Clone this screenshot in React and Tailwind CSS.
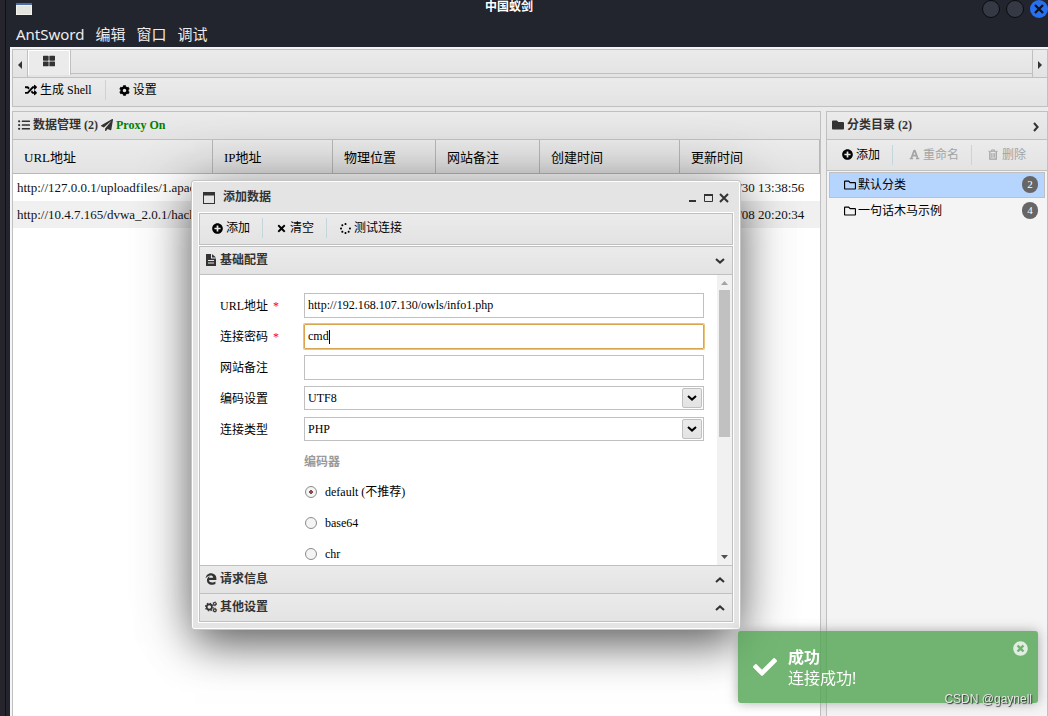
import React, { useState } from 'react';
import {
    FaRandom, FaCog, FaListUl, FaPaperPlane, FaFolder, FaRegFolder, FaFont,
    FaPlusCircle, FaTimes, FaSpinner, FaEdgeLegacy, FaThLarge, FaCheck, FaTimesCircle,
} from 'react-icons/fa';

const serif = "font-['Liberation_Serif','Noto_Sans_CJK_SC',serif]";
const sans = "font-['Noto_Sans','Noto_Sans_CJK_SC',sans-serif]";
const bar = 'bg-gradient-to-b from-[#ebebeb] to-[#e3e3e3]';

const columns = ['URL地址', 'IP地址', '物理位置', '网站备注', '创建时间', '更新时间'];

const rows = [
    { url: 'http://127.0.0.1/uploadfiles/1.apac', updated: '2022/03/30 13:38:56' },
    { url: 'http://10.4.7.165/dvwa_2.0.1/hack', updated: '2022/03/08 20:20:34' },
];

const categories = [
    { name: '默认分类', count: 2, active: true },
    { name: '一句话木马示例', count: 4, active: false },
];

const encoders = ['default (不推荐)', 'base64', 'chr'];

const Chevron = ({ className = '' }) => (
    <svg width="10" height="6" viewBox="0 0 10 6" fill="none" stroke="currentColor" strokeWidth="2" className={className}>
        <path d="M1 1l4 3.6L9 1" />
    </svg>
);

const FileIcon = ({ className = '' }) => (
    <svg viewBox="0 0 12 12" className={className}>
        <path d="M1 0h5v4.500h5V12H1z" fill="currentColor" />
        <path d="M7 0l4 3.500H7z" fill="currentColor" />
        <path d="M3 6.500h6M3 9h6" stroke="#e7e7e7" />
    </svg>
);

const TrashIcon = ({ className = '' }) => (
    <svg viewBox="0 0 11 12" fill="none" stroke="currentColor" className={className}>
        <path d="M0 2.500h10M3.500 2.500v-1.500h3v1.500" />
        <path d="M1.500 3v8h7V3" strokeWidth="1.400" />
        <path d="M3.500 4.500v5M5 4.500v5M6.500 4.500v5" strokeWidth="0.900" />
    </svg>
);

const CogsIcon = ({ className = '' }) => (
    <svg viewBox="0 0 12 12" fill="none" stroke="currentColor" className={className}>
        <circle cx="4.3" cy="6" r="2.600" strokeWidth="1.600" />
        <circle cx="4.3" cy="6" r="3.800" strokeWidth="1.200" strokeDasharray="1.500 1.485" />
        <circle cx="9.8" cy="2.8" r="1.300" strokeWidth="1.100" />
        <circle cx="9.8" cy="2.8" r="2" strokeWidth="0.800" strokeDasharray="1 1.094" />
        <circle cx="9.8" cy="9.2" r="1.300" strokeWidth="1.100" />
        <circle cx="9.8" cy="9.2" r="2" strokeWidth="0.800" strokeDasharray="1 1.094" />
    </svg>
);

const Separator = () => <span className="w-px h-5 bg-[#c3d6dc]" />;

const ToolButton = ({ icon: Icon, wide, children, disabled, className = '' }) => (
    <button type="button" disabled={disabled} className={`flex items-center gap-[3px] text-xs whitespace-nowrap text-black disabled:text-[#a3a3a3] ${className}`}>
        <Icon className={wide ? 'w-3 h-3' : 'w-[11px] h-[11px]'} />
        {children}
    </button>
);

const TitleBar = () => (
    <header className={`h-[47px] shrink-0 bg-[#23252e] ${sans}`}>
        <div className="grid grid-cols-[1fr_auto_1fr] items-center h-[14px] pl-[10px]">
            <svg width="16" height="12" viewBox="0 0 16 12">
                <rect width="16" height="12" fill="#f1f1ed" />
                <rect width="16" height="2" fill="#4a6da8" />
                <rect x="1" y="3" width="14" height="8" fill="#e3e3df" />
            </svg>
            <h1 className="pr-[46px] pb-1 text-xs leading-[14px] font-bold text-white">中国蚁剑</h1>
            <div className="flex justify-end gap-[6px]">
                <button type="button" aria-label="最小化" className="w-[18px] h-[18px] rounded-full bg-[#343944] border border-[#0b0c10]" />
                <button type="button" aria-label="最大化" className="w-[18px] h-[18px] rounded-full bg-[#343944] border border-[#0b0c10]" />
                <button type="button" aria-label="关闭" className="w-[18px] h-[18px] rounded-full bg-[#2771f1] flex items-center justify-center">
                    <svg width="10" height="10" viewBox="0 0 10 10" stroke="#10131c" strokeWidth="2.4">
                        <path d="M1 1l8 8M9 1l-8 8" />
                    </svg>
                </button>
            </div>
        </div>
        <nav className="flex gap-[11px] pl-[10px] pt-[10px] text-[15px] leading-5 text-[#ececec]">
            {['AntSword', '编辑', '窗口', '调试'].map((item) => (
                <button key={item} type="button">{item}</button>
            ))}
        </nav>
    </header>
);

const TabBar = () => (
    <div className={`flex h-[28px] shrink-0 border-t border-l border-r border-[#c0c0c0] ${bar}`}>
        <button type="button" aria-label="向左" className="w-[15px] flex items-center justify-center border-r border-[#c0c0c0] pt-[3px]">
            <svg width="4" height="8" viewBox="0 0 4 8"><path d="M4 0v8L0 4z" fill="#333" /></svg>
        </button>
        <button type="button" aria-label="主页" className="w-[43px] flex justify-center items-start pt-[5px] h-[25px] bg-[#ebebeb] border-r border-[#c0c0c0] shadow-[inset_1px_1px_0_#fff,inset_-1px_0_0_#fff]">
            <FaThLarge className="w-3 h-3 text-[#333]" />
        </button>
        <div className="flex-1 h-[24px] border-b border-[#c0c0c0]" />
        <button type="button" aria-label="向右" className="w-[15px] flex items-center justify-center border-l border-[#c0c0c0] pt-[3px]">
            <svg width="4" height="8" viewBox="0 0 4 8"><path d="M0 0v8l4-4z" fill="#333" /></svg>
        </button>
    </div>
);

const ShellList = () => (
    <section className="flex-1 min-w-0 flex flex-col border border-b-0 border-[#c0c0c0] bg-white">
        <h2 className={`flex items-center gap-[3px] h-[28px] shrink-0 pl-[5px] pb-px text-xs font-bold text-[#333] border-b border-[#c0c0c0] ${bar}`}>
            <FaListUl className="w-3 h-3" />
            <span>数据管理 (2)</span>
            <FaPaperPlane className="w-3 h-3" />
            <span className="text-[#008000]">Proxy On</span>
        </h2>
        <table className="w-full table-fixed border-separate border-spacing-0 text-[13px] leading-4">
            <colgroup>
                <col className="w-[200px]" />
                <col className="w-[120px]" />
                <col className="w-[103px]" />
                <col className="w-[104px]" />
                <col className="w-[140px]" />
                <col />
            </colgroup>
            <thead>
                <tr>
                    {columns.map((name) => (
                        <th key={name} className={`h-[34px] pl-[11px] pt-[2px] text-left font-normal text-black border-r border-b border-[#b8b8b8] ${bar}`}>{name}</th>
                    ))}
                </tr>
            </thead>
            <tbody>
                {rows.map((row) => (
                    <tr key={row.url} className="h-[27px] text-[#111] even:bg-[#f0f0f0]">
                        <td className="pl-1 whitespace-nowrap">{row.url}</td>
                        <td />
                        <td />
                        <td />
                        <td />
                        <td className="text-center whitespace-nowrap">{row.updated}</td>
                    </tr>
                ))}
            </tbody>
        </table>
    </section>
);

const CategoryPanel = () => (
    <aside className="w-[222px] shrink-0 flex flex-col border border-b-0 border-[#c0c0c0] bg-[#f4f4f4]">
        <h2 className={`flex items-center gap-[3px] h-[28px] shrink-0 pl-[5px] pr-[6px] pb-px text-xs font-bold text-[#333] border-b border-[#c0c0c0] ${bar}`}>
            <FaFolder className="w-3 h-3" />
            <span className="flex-1">分类目录 (2)</span>
            <button type="button" aria-label="折叠" className="pt-[3px]"><Chevron className="-rotate-90" /></button>
        </h2>
        <div className={`flex items-center h-[31px] shrink-0 border-b border-[#c0c0c0] pb-px ${bar}`}>
            <ToolButton icon={FaPlusCircle} className="pl-[15px] pr-3">添加</ToolButton>
            <Separator />
            <ToolButton icon={FaFont} disabled className="pl-4 pr-3">重命名</ToolButton>
            <Separator />
            <ToolButton icon={TrashIcon} disabled className="pl-4">删除</ToolButton>
        </div>
        <ul className="p-px text-xs text-black">
            {categories.map((item) => (
                <li
                    key={item.name}
                    className={`flex items-center gap-[2px] h-[26px] mx-px pl-[14px] pr-[6px] pb-px border ${item.active ? 'bg-[#b5d5ff] border-[#c0c0c0]' : 'border-transparent'}`}
                >
                    <FaRegFolder className="w-3 h-3" />
                    <span className="flex-1">{item.name}</span>
                    <span className="w-4 h-[17px] rounded-full bg-[#666] text-white text-[11px] leading-[17px] text-center">{item.count}</span>
                </li>
            ))}
        </ul>
    </aside>
);

const Field = ({ id, label, required, children }) => (
    <div className="flex items-center h-[31px]">
        <label htmlFor={id} className="w-[84px] shrink-0 pt-px">
            {label}
            {required && <span className="text-[#f00] ml-[5px]">*</span>}
        </label>
        <div className="relative flex-1">{children}</div>
    </div>
);

const SelectBox = ({ id, options }) => (
    <div className="relative pb-px">
        <select id={id} className="block w-full h-6 pl-[3px] pb-px bg-white border border-[#c0c0c0] appearance-none outline-none">
            {options.map((o) => <option key={o}>{o}</option>)}
        </select>
        <span className={`absolute right-[2px] top-[2px] w-5 h-5 flex items-center justify-center pointer-events-none border border-[#c0c0c0] rounded-[2px] ${bar}`}>
            <Chevron />
        </span>
    </div>
);

const Section = ({ icon: Icon, title, open }) => (
    <h3 className="shrink-0">
        <button type="button" className={`w-full flex items-center gap-[3px] h-[28px] pl-[5px] pr-[7px] pb-px text-xs font-bold text-[#333] border-b border-[#c0c0c0] ${bar}`}>
            <Icon className="w-3 h-3" />
            <span className="flex-1 text-left">{title}</span>
            <Chevron className={open ? 'translate-y-px' : 'rotate-180 translate-y-px'} />
        </button>
    </h3>
);

const AddDialog = () => {
    const [url, setUrl] = useState('http://192.168.107.130/owls/info1.php');
    const [pwd, setPwd] = useState('cmd');
    const [note, setNote] = useState('');
    const [encoder, setEncoder] = useState(encoders[0]);

    return (
        <div
            role="dialog"
            aria-label="添加数据"
            className="absolute left-[191px] top-[180px] w-[550px] h-[450px] flex flex-col px-[6px] pb-[6px] rounded-[3px] border border-[#c4c4c4] bg-[#e4e4e4] shadow-[inset_0_0_0_1px_#fff,0_0_60px_rgba(0,0,0,0.3),0_18px_40px_-4px_rgba(0,0,0,0.5)]"
        >
            <div className="flex items-center h-[31px] shrink-0 pl-[5px] pr-[5px] pt-[2px] text-[#333]">
                <svg width="12" height="12" viewBox="0 0 12 12" fill="none" stroke="currentColor">
                    <rect x="0.5" y="0.5" width="11" height="11" />
                    <path d="M0 2h12" strokeWidth="3" />
                </svg>
                <h2 className="flex-1 pl-2 pb-[2px] text-xs font-bold">添加数据</h2>
                <div className="flex items-center gap-[6px]">
                    <button type="button" aria-label="最小化">
                        <svg width="10" height="10" viewBox="0 0 10 10"><path d="M1 7h7v2H1z" fill="currentColor" /></svg>
                    </button>
                    <button type="button" aria-label="最大化">
                        <svg width="9" height="8" viewBox="0 0 9 8" fill="none" stroke="currentColor"><path d="M.5 1v6.500h8V1" /><path d="M0 1h9" strokeWidth="2" /></svg>
                    </button>
                    <button type="button" aria-label="关闭">
                        <svg width="10" height="10" viewBox="0 0 10 10" stroke="currentColor" strokeWidth="2"><path d="M1 1l8 8M9 1L1 9" /></svg>
                    </button>
                </div>
            </div>
            <div className="flex-1 min-h-0 flex flex-col border border-white bg-white">
                <div className={`flex items-center h-8 shrink-0 mb-px pb-[2px] border border-[#c0c0c0] ${bar}`}>
                    <ToolButton icon={FaPlusCircle} className="pl-3 pr-3">添加</ToolButton>
                    <Separator />
                    <ToolButton icon={FaTimes} className="pl-[13px] pr-3">清空</ToolButton>
                    <Separator />
                    <ToolButton icon={FaSpinner} className="pl-[13px]">测试连接</ToolButton>
                </div>
                <div className="flex-1 min-h-0 flex flex-col border border-b-0 border-[#c0c0c0]">
                    <Section icon={FileIcon} title="基础配置" open />
                    <div className="flex-1 min-h-0 flex overflow-hidden border-b border-[#c0c0c0]">
                        <form className="flex-1 pl-5 pr-[13px] pt-[15px] text-xs text-black">
                            <Field id="url" label="URL地址" required>
                                <input id="url" value={url} onChange={(e) => setUrl(e.target.value)} className="block w-full h-[25px] pl-[3px] border border-[#c0c0c0] outline-none" />
                            </Field>
                            <Field id="pwd" label="连接密码" required>
                                <input id="pwd" value={pwd} onChange={(e) => setPwd(e.target.value)} className="block w-full h-[25px] pl-[3px] caret-transparent border border-[#dba550] rounded-[1px] shadow-[0_0_0_1px_#ebc47c] outline-none" />
                                <span aria-hidden="true" className="absolute left-1 top-[6px] h-[14px] border-r border-black text-transparent pointer-events-none select-none leading-[14px]">{pwd}</span>
                            </Field>
                            <Field id="note" label="网站备注">
                                <input id="note" value={note} onChange={(e) => setNote(e.target.value)} className="block w-full h-[25px] pl-[3px] border border-[#c0c0c0] outline-none" />
                            </Field>
                            <Field id="encode" label="编码设置">
                                <SelectBox id="encode" options={['UTF8', 'GBK']} />
                            </Field>
                            <Field id="type" label="连接类型">
                                <SelectBox id="type" options={['PHP', 'ASP', 'CUSTOM']} />
                            </Field>
                            <fieldset className="pl-[84px] pt-2">
                                <legend className="contents">
                                    <span className="block font-bold text-[#999] leading-[18px] pb-[5px]">编码器</span>
                                </legend>
                                {encoders.map((name) => (
                                    <label key={name} className="flex items-center gap-2 h-[31px] pl-px">
                                        <input
                                            type="radio"
                                            name="encoder"
                                            checked={encoder === name}
                                            onChange={() => setEncoder(name)}
                                            className="appearance-none w-3 h-3 rounded-full border border-[#8c8c8c] bg-[#f4f4f4] checked:bg-[radial-gradient(circle,#8d4a4a_0_2px,#f4f4f4_2px)]"
                                        />
                                        {name}
                                    </label>
                                ))}
                            </fieldset>
                        </form>
                        <div className="w-[15px] shrink-0 flex flex-col items-center bg-[#f1f1f1]">
                            <div className="h-[15px] shrink-0 flex items-center">
                                <svg width="7" height="4" viewBox="0 0 7 4"><path d="M0 4h7L3.500 0z" fill="#a3a3a3" /></svg>
                            </div>
                            <div className="w-[11px] h-[147px] bg-[#c1c1c1]" />
                            <div className="mt-auto h-[17px] shrink-0 flex items-center">
                                <svg width="7" height="4" viewBox="0 0 7 4"><path d="M0 0h7L3.500 4z" fill="#505050" /></svg>
                            </div>
                        </div>
                    </div>
                    <Section icon={FaEdgeLegacy} title="请求信息" />
                    <Section icon={CogsIcon} title="其他设置" />
                </div>
            </div>
        </div>
    );
};

const Toast = () => (
    <div role="status" className={`fixed right-[10px] bottom-[13px] w-[300px] h-[72px] flex items-center pl-[15px] rounded-[3px] bg-[#51a351] text-white opacity-80 shadow-[0_0_12px_#999] ${sans}`}>
        <FaCheck className="w-6 h-6" />
        <div className="flex-1 pl-[11px] pt-px text-base leading-[21px]">
            <p className="font-bold">成功</p>
            <p>连接成功!</p>
        </div>
        <button type="button" aria-label="关闭" className="self-start pt-[10px] pr-[10px] opacity-80">
            <FaTimesCircle className="w-[15px] h-[15px]" />
        </button>
    </div>
);

const App = () => (
    <div className={`relative h-screen overflow-hidden flex bg-[#23252e] ${serif}`}>
        <div className="w-[6px] shrink-0 bg-[#26252e] border-r border-[#101116]" />
        <div className="flex-1 min-w-0 flex flex-col">
            <TitleBar />
            <main className="flex-1 min-h-0 flex flex-col ml-1 pl-[2px] pt-[2px] bg-[#f4f4f4]">
                <TabBar />
                <div className={`flex items-center h-[30px] shrink-0 pb-1 border border-[#c0c0c0] ${bar}`}>
                    <ToolButton icon={FaRandom} wide className="pl-3 pr-[13px]">生成 Shell</ToolButton>
                    <Separator />
                    <ToolButton icon={FaCog} className="pl-[13px]">设置</ToolButton>
                </div>
                <div className="flex-1 min-h-0 flex gap-[5px] pt-1 bg-[#ebebeb]">
                    <ShellList />
                    <CategoryPanel />
                </div>
            </main>
        </div>
        <AddDialog />
        <Toast />
        <div className="fixed right-4 bottom-[9px] text-xs leading-4 text-[#e6e6e6] font-['Liberation_Sans',sans-serif] [text-shadow:1px_1px_1px_#333]">CSDN @gaynell</div>
    </div>
);

export default App;
